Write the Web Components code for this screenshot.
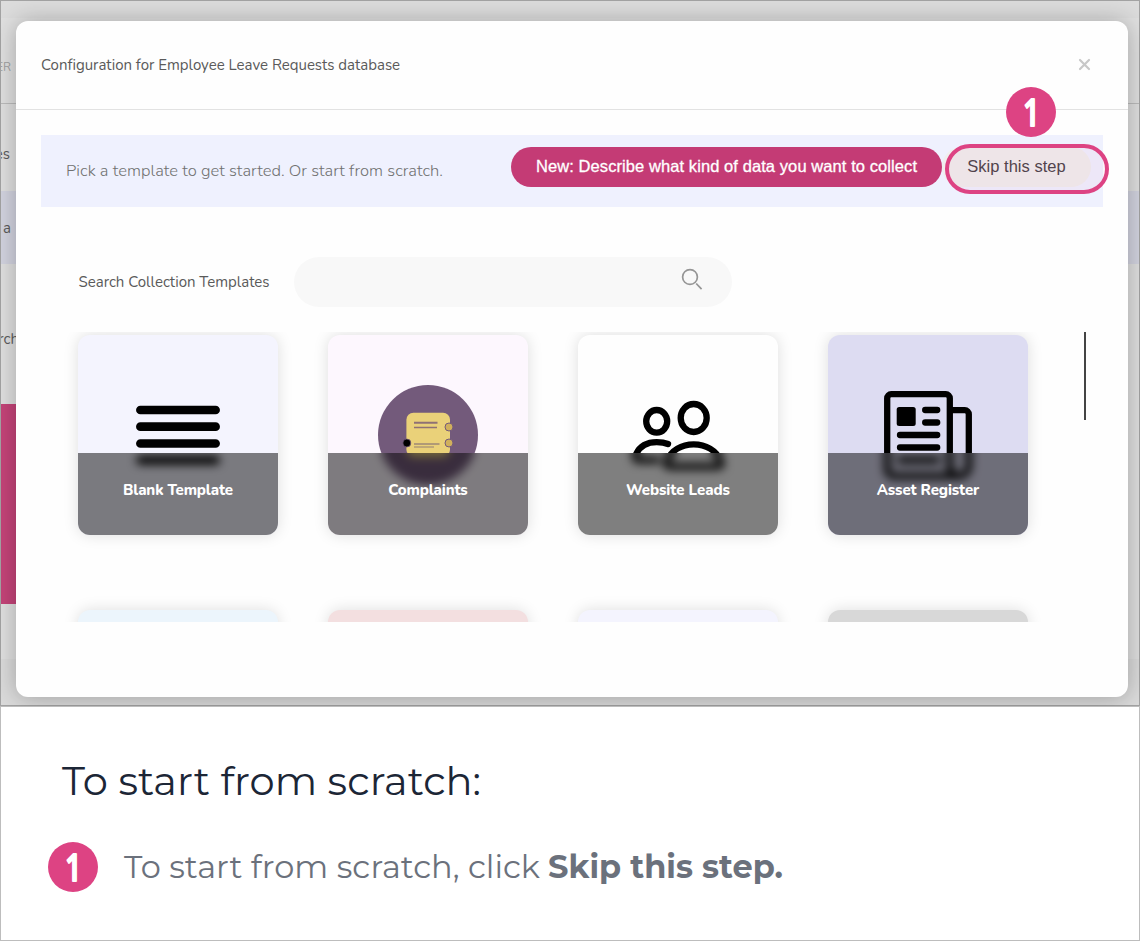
<!DOCTYPE html>
<html lang="en">
<head>
<meta charset="utf-8">
<title>Configuration for Employee Leave Requests database</title>
<style>
  html, body { margin: 0; height: 100%; overflow: hidden; }
  body { background: #fff; font-family: "Nunito", "Open Sans", sans-serif; color: #555; }
</style>
</head>
<body>
<guide-page></guide-page>

<script>
class BaseElement extends HTMLElement {
  constructor() {
    super();
    const t = document.createElement('template');
    t.innerHTML = this.constructor.markup;
    this.attachShadow({ mode: 'open' }).appendChild(t.content.cloneNode(true));
  }
}

/* One line of text tracked so that it fills the width given in "w". */
class FitText extends BaseElement {
  static markup = `
    <style>
      :host { display: inline-block; white-space: nowrap; }
      span { display: inline-block; }
    </style>
    <span><slot></slot></span>`;
  connectedCallback() {
    const span = this.shadowRoot.querySelector('span');
    const w = parseFloat(this.getAttribute('w'));
    const n = this.textContent.length;
    const natural = span.getBoundingClientRect().width;
    if (natural && n > 1) {
      const ls = (w - natural) / (n - 1);
      span.style.letterSpacing = ls + 'px';
      span.style.marginRight = -ls + 'px';
    }
  }
}

class StepBadge extends BaseElement {
  static markup = `
    <style>
      :host { display: block; width: 50px; height: 50px; border-radius: 50%; background: #dd4383; flex: none; }
      svg { display: block; overflow: visible; }
      text { font: 600 38px "Open Sans", sans-serif; fill: #fff; stroke: #fff; stroke-width: 2px; stroke-linejoin: round; }
    </style>
    <svg width="50" height="50" viewBox="0 0 50 50"><text transform="translate(25.500 38.800) scale(.75 1)" text-anchor="middle">1</text></svg>`;
}

/* The dimmed page that lies behind the dialog. */
class DimmedPage extends BaseElement {
  static markup = `
    <style>
      :host { display: flex; flex-direction: column; box-sizing: border-box; height: 706px;
              border: 1px solid #a3a3a3; background: #e0e0e0; font-size: 15px; color: #5c5c5c; overflow: hidden; }
      div { display: flex; align-items: center; box-sizing: border-box; }
      p { margin: 0; width: 10px; display: flex; justify-content: flex-end; white-space: nowrap; line-height: 20px; }
      .top { height: 17px; background: #dcdcdc; }
      .head { height: 86px; border-bottom: 1px solid #bcbcbc; color: #a0a0a0; font-size: 12px; padding-top: 12px; }
      .tabs { height: 87px; padding-top: 13px; }
      .tabs p { width: 9px; }
      .band { height: 73px; background: #d3d4e0; }
      .find { height: 140px; padding-top: 10px; }
      .find p { width: 18px; }
      .hero { height: 200px; width: 100px; background: #c54479; }
      .gap { height: 55px; }
      .foot { flex: 1; background: #dbdbdb; }
    </style>
    <div class="top"></div>
    <div class="head"><p>ER</p></div>
    <div class="tabs"><p>es</p></div>
    <div class="band"><p>a</p></div>
    <div class="find"><p>rch</p></div>
    <div class="hero"></div>
    <div class="gap"></div>
    <div class="foot"></div>`;
}

class PillButton extends BaseElement {
  static markup = `
    <style>
      :host { display: block; }
      button { display: flex; align-items: center; justify-content: center; box-sizing: border-box; width: 100%; height: 40px;
               border: 0; border-radius: 20px; margin: 0; padding: 0 0 1px; background: var(--bg); color: var(--fg);
               font: var(--size, 16px) "Liberation Sans", Arial, sans-serif; -webkit-text-stroke: var(--stroke, 0); }
    </style>
    <button><slot></slot></button>`;
}

/* The caption is frosted: a blurred copy of the art under it, its top row
   stretched upwards so that nothing above the caption bleeds in. */
class TemplateCard extends BaseElement {
  static markup = `
    <style>
      :host { display: block; width: 200px; height: 200px; border-radius: 12px; background: var(--card);
              box-shadow: 0 0 15px rgba(0,0,0,.13); }
      .clip { display: grid; width: 200px; height: 200px; border-radius: 12px; overflow: hidden; }
      .art, .cap { grid-area: 1 / 1; }
      .cap { align-self: end; display: grid; height: 82px; overflow: hidden; background: var(--card); }
      .frost, .label { grid-area: 1 / 1; min-height: 0; }
      .frost { height: 102px; margin-top: -20px; filter: blur(5px); }
      .frost svg { display: block; width: 200px; }
      .label { z-index: 1; height: 82px; box-sizing: border-box; display: flex; justify-content: center; padding-top: 26px;
             background: rgba(0,0,0,.5); color: #fff; font-weight: 800; font-size: 15px; line-height: 22px; }
      :host([plain]) .cap { display: none; }
    </style>
    <div class="clip">
      <div class="art"><slot name="art"></slot></div>
      <div class="cap"><div class="frost"></div><div class="label"><slot></slot></div></div>
    </div>`;
  connectedCallback() {
    const art = this.querySelector('svg');
    if (!art) return;
    const frost = this.shadowRoot.querySelector('.frost');
    for (const [box, h] of [['0 118 200 1', 20], ['0 118 200 82', 82]]) {
      const copy = art.cloneNode(true);
      copy.removeAttribute('slot');
      copy.setAttribute('viewBox', box);
      copy.setAttribute('preserveAspectRatio', 'none');
      copy.style.height = h + 'px';
      frost.appendChild(copy);
    }
  }
}

class TemplateGrid extends BaseElement {
  static markup = `
    <style>
      :host { display: flex; justify-content: space-between; height: 290px; overflow: hidden; padding: 0 17px 0 12px; }
      .grid { display: grid; grid-template-columns: repeat(4, 200px); gap: 75px 50px; padding: 3px 25px; align-content: start; }
      .thumb { width: 2px; height: 88px; background: #444; }
      svg { display: block; width: 200px; height: 200px; }
    </style>
    <div class="grid">
      <template-card style="--card:#f4f4fe">
        <svg slot="art" viewBox="0 0 200 200" stroke="#000" stroke-width="8.7" stroke-linecap="round">
          <path d="M62.4 75h75.2M62.4 91.7h75.2M62.4 108.5h75.2M62.4 125.2h75.2"/>
        </svg><fit-text w="110">Blank Template</fit-text>
      </template-card>
      <template-card style="--card:#fdf7fe">
        <svg slot="art" viewBox="0 0 200 200">
          <circle cx="100" cy="100" r="50" fill="#735a7b"/>
          <rect x="78.4" y="77.8" width="43.6" height="44" rx="7" fill="#ead179"/>
          <g stroke="#8f7175"><path d="M86 87.7h23.5" stroke-width="2"/><path d="M86 92.5h23" stroke-width="1.3"/></g>
          <g stroke="#b09a76"><path d="M86 109h25.5" stroke-width="1.8"/><path d="M86 112h20" stroke-width="1.5"/></g>
          <g fill="#d0b05c" stroke="#735a7b" stroke-width="1"><circle cx="121" cy="92" r="4"/><circle cx="121" cy="108" r="4"/></g>
          <circle cx="78.8" cy="108" r="4" stroke="#735a7b" stroke-width=".8"/>
        </svg><fit-text w="79.5">Complaints</fit-text>
      </template-card>
      <template-card style="--card:#fefefe">
        <svg slot="art" viewBox="0 0 200 200" fill="none" stroke="#000" stroke-width="6.3" stroke-linecap="round" stroke-linejoin="round">
          <ellipse cx="78.7" cy="86.3" rx="10.5" ry="11.3"/>
          <ellipse cx="115.7" cy="83" rx="13" ry="14"/>
          <path d="M90 109C86.500 107.600 82.500 107.200 78.700 107.200c-10 0-17 4.600-20.500 11.600-2 4-1.500 6.200 2 6.200h19"/>
          <path d="M91.500 131.500h48.500q5 0 3-5C138.500 115 127.500 109.400 115.700 109.400S93 115 88.500 126.500q-2 5 3 5z"/>
        </svg><fit-text w="104">Website Leads</fit-text>
      </template-card>
      <template-card style="--card:#dddcf2">
        <svg slot="art" viewBox="0 0 200 200" fill="none" stroke="#000" stroke-width="6.3" stroke-linecap="round">
          <path d="M131.400 141.200H65.500a6.300 6.300 0 0 1-6.300-6.300V63.200a4 4 0 0 1 4-4h54.600a4 4 0 0 1 4 4V131.500a9.500 9.500 0 0 0 19 0V79.200a4 4 0 0 0-4-4H123"/>
          <rect x="68.700" y="72" width="19" height="19" rx="2.500" fill="#000" stroke="none"/>
          <path d="M97.200 75h12M97.200 87.500h12M72 100h37.200M72 112.500h37.200M72 125h37.200"/>
        </svg><fit-text w="102.5">Asset Register</fit-text>
      </template-card>
      <template-card plain style="--card:#ecf5fc"></template-card>
      <template-card plain style="--card:#f3dfe0"></template-card>
      <template-card plain style="--card:#f4f4fe"></template-card>
      <template-card plain style="--card:#d8d8d8"></template-card>
    </div>
    <div class="thumb"></div>`;
}

class SearchRow extends BaseElement {
  static markup = `
    <style>
      :host { display: flex; align-items: center; gap: 24.500px; height: 50px; padding-left: 37.500px; color: #5a5a5a; font-size: 15px; }
      .field { display: flex; align-items: center; justify-content: flex-end; width: 438px; height: 50px; border-radius: 25px;
               background: #f8f8f8; box-sizing: border-box; padding-right: 29px; }
      svg { width: 22px; height: 22px; margin-bottom: 6px; }
    </style>
    <fit-text w="191">Search Collection Templates</fit-text>
    <div class="field">
      <svg viewBox="0 0 22 22" fill="none" stroke="#959595" stroke-width="1.700"><circle cx="9" cy="9" r="7.400"/><path d="M15.200 15.500l5.400 5.600"/></svg>
    </div>`;
}

class TemplateBanner extends BaseElement {
  static markup = `
    <style>
      :host { display: flex; align-items: flex-start; box-sizing: border-box; height: 72px; background: #eff1fe; padding: 12px 12px 0 25px; position: relative; }
      .lead { flex: 1; font-size: 16.500px; font-weight: 350; line-height: 48px; color: #717171; }
      .new { --bg: #c43b75; --fg: #fff; --stroke: .3px; --size: 16.500px; width: 431px; }
      .skip { --bg: #f0efee; --fg: #4b4449; --size: 16.500px; width: 149px; }
      .ring { position: absolute; left: 904px; top: 9px; width: 164px; height: 50px; box-sizing: border-box;
              border: 4px solid #dd4383; border-radius: 25px; background: rgba(221,67,131,.05); }
      step-badge { position: absolute; left: 965px; top: -48px; }
    </style>
    <div class="lead"><fit-text w="377">Pick a template to get started. Or start from scratch.</fit-text></div>
    <pill-button class="new"><fit-text w="381">New: Describe what kind of data you want to collect</fit-text></pill-button>
    <pill-button class="skip"><fit-text w="98.500">Skip this step</fit-text></pill-button>
    <div class="ring"></div>
    <step-badge></step-badge>`;
}

class ConfigDialog extends BaseElement {
  static markup = `
    <style>
      :host { display: flex; flex-direction: column; position: absolute; left: 16px; top: 21px; width: 1112px; height: 676px;
              background: #fefefe; border-radius: 12px; box-shadow: 0 1px 24px rgba(0,0,0,.28); }
      header { display: flex; align-items: center; justify-content: space-between; box-sizing: border-box; height: 89px;
               padding: 0 37px 0 25px; border-bottom: 1px solid #e2e2e2; font-size: 15px; color: #5a5a5a; }
      header svg { width: 13px; height: 13px; margin-bottom: 1px; }
      main { display: flex; flex-direction: column; padding: 25px 25px 0; }
      search-row { margin: 50px 0 25px; }
    </style>
    <header>
      <fit-text w="359">Configuration for Employee Leave Requests database</fit-text>
      <svg viewBox="0 0 13 13" stroke="#c8c8c8" stroke-width="2.200" stroke-linecap="round"><path d="M2 2l9 9M11 2l-9 9"/></svg>
    </header>
    <main>
      <template-banner></template-banner>
      <search-row></search-row>
      <template-grid></template-grid>
    </main>`;
}

class GuideNotes extends BaseElement {
  static markup = `
    <style>
      :host { display: block; position: relative; z-index: 1; box-sizing: border-box; height: 235px; border: 1px solid #bdbdbd; background: #fff;
              padding: 48px 47px 0; font-family: "Montserrat", "Inter", sans-serif; }
      h1 { margin: 0 0 0 14px; font-weight: 400; font-size: 40px; line-height: 52px; color: #1c2636; }
      .step { display: flex; align-items: center; margin-top: 35px; height: 50px; font-size: 32px; color: #6b717c; font-weight: 400; line-height: 50px; }
      .step fit-text { margin-left: 26px; }
      .step b { font-weight: 700; }
      .step b fit-text { margin-left: 8px; }
    </style>
    <h1><fit-text w="419">To start from scratch:</fit-text></h1>
    <div class="step"><step-badge></step-badge><fit-text w="416">To start from scratch, click</fit-text><b><fit-text w="235">Skip this step.</fit-text></b></div>`;
}

class GuidePage extends BaseElement {
  static markup = `
    <style>
      :host { display: block; position: relative; width: 1140px; height: 941px; overflow: hidden; }
    </style>
    <dimmed-page></dimmed-page>
    <config-dialog></config-dialog>
    <guide-notes></guide-notes>`;
}

customElements.define('step-badge', StepBadge);
customElements.define('dimmed-page', DimmedPage);
customElements.define('pill-button', PillButton);
customElements.define('template-card', TemplateCard);
customElements.define('template-grid', TemplateGrid);
customElements.define('search-row', SearchRow);
customElements.define('template-banner', TemplateBanner);
customElements.define('config-dialog', ConfigDialog);
customElements.define('guide-notes', GuideNotes);
customElements.define('guide-page', GuidePage);
customElements.define('fit-text', FitText);
</script>
</body>
</html>
